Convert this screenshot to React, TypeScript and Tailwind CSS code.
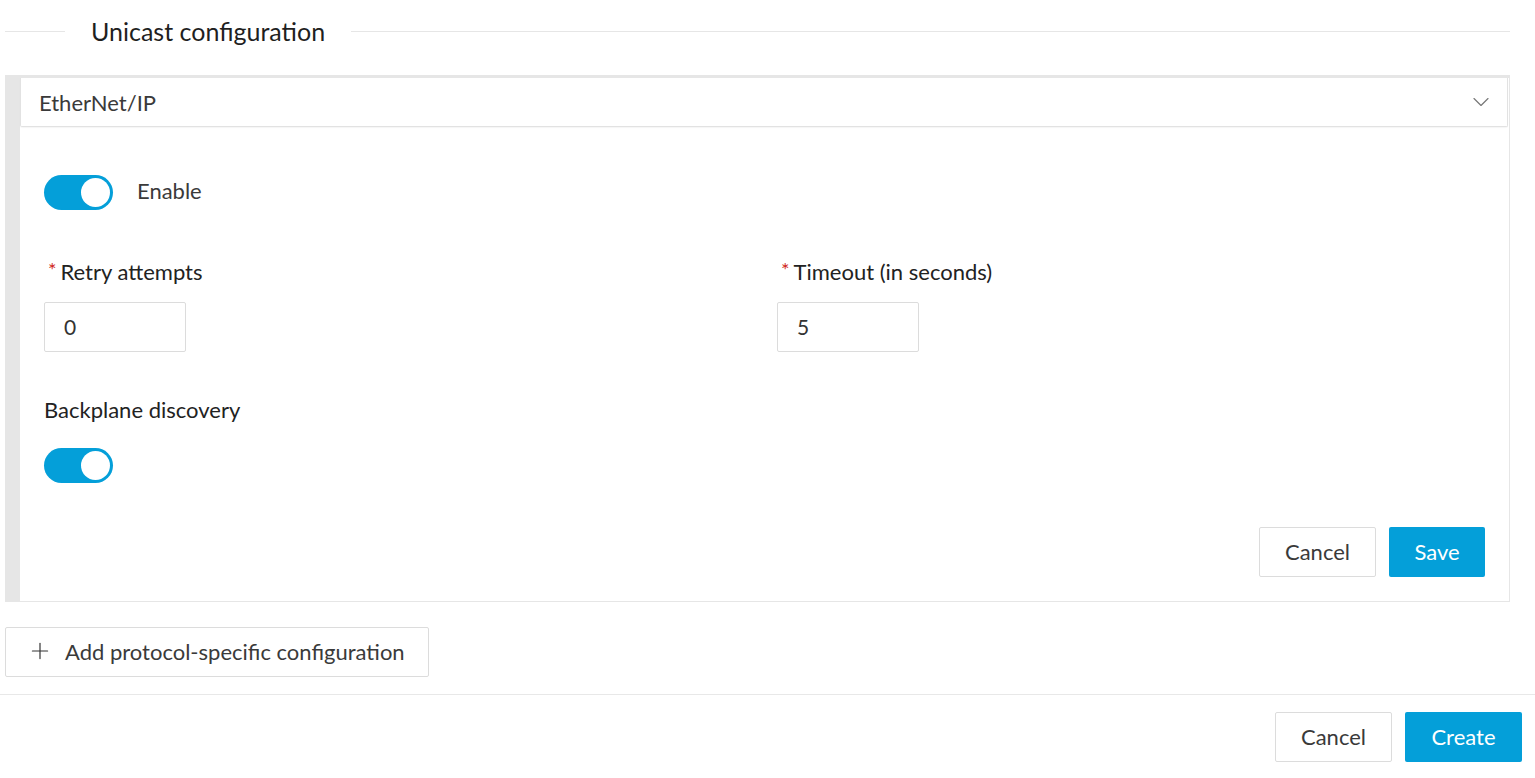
import { ChevronDown, Plus } from 'lucide-react'

function Toggle() {
  return (
    <div className="w-[69px] h-[35px] rounded-full bg-[#049fd9] flex items-center justify-end pr-[3px]">
      <div className="w-[29px] h-[29px] rounded-full bg-white" />
    </div>
  )
}

function Field({ label, value }: { label: string; value: string }) {
  return (
    <div className="flex flex-col">
      <div className="h-[24px] flex items-center text-[22px] text-[#222] pl-[4px] -translate-y-[1px]">
        <span className="text-[#d0261c] text-[20px] mr-[4px] -translate-y-[2px]">*</span>
        {label}
      </div>
      <div className="mt-[18px] w-[142px] h-[50px] border border-[#dcdcdc] rounded-[2px] flex items-center pl-[19px] text-[21px] text-[#333]">
        {value}
      </div>
    </div>
  )
}

export default function App() {
  return (
    <div className="w-[1535px] h-[778px] bg-white overflow-hidden" style={{ fontFamily: 'Lato, "Open Sans", sans-serif' }}>
      {/* Section title */}
      <div className="pl-[5px] pr-[25px] h-[62px] flex items-center">
        <div className="w-[60px] h-px bg-[#e6e6e6]" />
        <div className="px-[26px] text-[25px] text-[#1f1f1f] leading-none">Unicast configuration</div>
        <div className="flex-1 h-px bg-[#e6e6e6]" />
      </div>

      {/* Protocol panel */}
      <div className="ml-[5px] mr-[25px] mt-[13px] border-t-[3px] border-r border-b border-[#e6e6e6] flex">
        <div className="w-[15px] bg-[#e6e6e6] shrink-0" />
        <div className="flex-1 flex flex-col">
          <div className="h-[49px] mr-[1px] border border-t-0 border-[#e2e2e2] rounded-b-[2px] shadow-[0_1px_1px_rgba(0,0,0,0.04)] flex items-center justify-between pl-[18px] pr-[12px]">
            <span className="text-[22px] text-[#3a3a3a]">EtherNet/IP</span>
            <ChevronDown className="w-[28px] h-[28px] text-[#777]" strokeWidth={1} />
          </div>
          <div className="pl-[24px] pr-[24px] pt-[48px] pb-[24px]">
            <div className="flex items-center gap-[24px]">
              <Toggle />
              <span className="text-[22px] text-[#3a3a3a] -translate-y-[2px]">Enable</span>
            </div>
            <div className="mt-[50px] grid grid-cols-[733px_1fr]">
              <Field label="Retry attempts" value="0" />
              <Field label="Timeout (in seconds)" value="5" />
            </div>
            <div className="mt-[46px] text-[22px] text-[#222] h-[24px] flex items-center -translate-y-[1px]">Backplane discovery</div>
            <div className="mt-[26px]">
              <Toggle />
            </div>
            <div className="mt-[44px] flex justify-end gap-[13px]">
              <button className="w-[117px] h-[50px] border border-[#dcdcdc] rounded-[2px] bg-white text-[22px] text-[#3a3a3a] pb-[2px]">Cancel</button>
              <button className="w-[96px] h-[50px] rounded-[2px] bg-[#049fd9] text-[22px] text-white pb-[2px]">Save</button>
            </div>
          </div>
        </div>
      </div>

      {/* Add button */}
      <div className="pl-[5px] mt-[25px]">
        <button className="w-[424px] h-[50px] border border-[#dcdcdc] rounded-[2px] bg-white flex items-center pl-[21px] gap-[12px] text-[22px] text-[#3a3a3a] pb-[2px]">
          <Plus className="w-[26px] h-[26px] text-[#333]" strokeWidth={1.1} />
          Add protocol-specific configuration
        </button>
      </div>

      {/* Footer */}
      <div className="mt-[17px] border-t border-[#e8e8e8] flex justify-end gap-[13px] pt-[17px] pr-[13px]">
        <button className="w-[117px] h-[50px] border border-[#dcdcdc] rounded-[2px] bg-white text-[22px] text-[#3a3a3a] pb-[2px]">Cancel</button>
        <button className="w-[117px] h-[50px] rounded-[2px] bg-[#049fd9] text-[22px] text-white pb-[2px]">Create</button>
      </div>
    </div>
  )
}
